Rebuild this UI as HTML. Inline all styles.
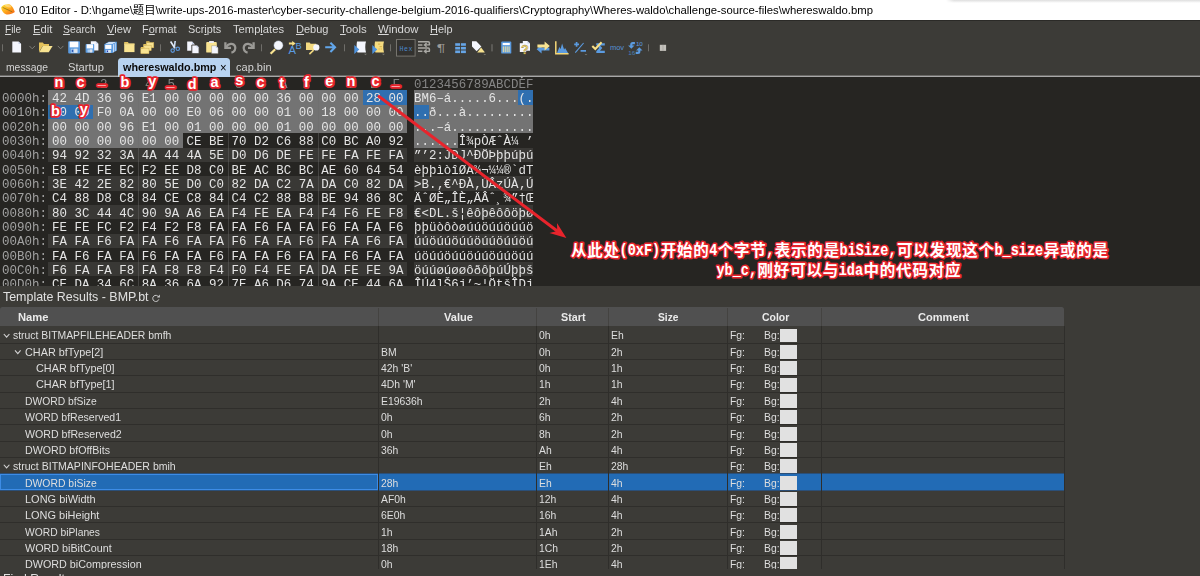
<!DOCTYPE html>
<html lang="en"><head><meta charset="utf-8"><title>010 Editor</title>
<style>
html,body{margin:0;padding:0;background:#3c3b37;overflow:hidden}
#r{position:relative;width:1200px;height:576px;overflow:hidden;background:#3c3b37;font-family:"Liberation Sans","Noto Sans CJK SC",sans-serif}
.b{position:absolute}
.t{position:absolute;white-space:pre;line-height:1;transform-origin:0 0}
.m{font-family:"Liberation Mono","DejaVu Sans Mono",monospace}
svg{position:absolute;left:0;top:0;overflow:visible}
</style></head>
<body><div id="r">
<div class="b" style="left:0px;top:0px;width:1200px;height:20px;background:#ffffff;"></div>
<div class="b" style="left:946px;top:0px;width:254px;height:3px;background:linear-gradient(#dedede,#ffffff);-webkit-mask-image:linear-gradient(90deg,transparent,#000 8px);mask-image:linear-gradient(90deg,transparent,#000 8px)"></div>
<div class="b" style="left:0px;top:20px;width:1200px;height:1px;background:#2b2a27;"></div>
<div class="b" style="left:0px;top:75px;width:1200px;height:1px;background:#6a6966;"></div>
<div class="b" style="left:0px;top:76px;width:1200px;height:1px;background:#a8a8a8;"></div>
<div class="b" style="left:118.2px;top:58px;width:111.8px;height:19px;background:#b8d3f0;border-radius:3.5px 3.5px 0 0"></div>
<div class="b" style="left:0px;top:77px;width:1200px;height:208.89999999999998px;background:#262522;"></div>
<div class="b" style="left:48.0px;top:90.3px;width:359.3px;height:14.32px;background:#393835;"></div>
<div class="b" style="left:413.7px;top:90.3px;width:119.36px;height:14.32px;background:#393835;"></div>
<div class="b" style="left:48.0px;top:118.94px;width:359.3px;height:14.32px;background:#393835;"></div>
<div class="b" style="left:413.7px;top:118.94px;width:119.36px;height:14.32px;background:#393835;"></div>
<div class="b" style="left:48.0px;top:147.58px;width:359.3px;height:14.32px;background:#393835;"></div>
<div class="b" style="left:413.7px;top:147.58px;width:119.36px;height:14.32px;background:#393835;"></div>
<div class="b" style="left:48.0px;top:176.22px;width:359.3px;height:14.32px;background:#393835;"></div>
<div class="b" style="left:413.7px;top:176.22px;width:119.36px;height:14.32px;background:#393835;"></div>
<div class="b" style="left:48.0px;top:204.86px;width:359.3px;height:14.32px;background:#393835;"></div>
<div class="b" style="left:413.7px;top:204.86px;width:119.36px;height:14.32px;background:#393835;"></div>
<div class="b" style="left:48.0px;top:233.5px;width:359.3px;height:14.32px;background:#393835;"></div>
<div class="b" style="left:413.7px;top:233.5px;width:119.36px;height:14.32px;background:#393835;"></div>
<div class="b" style="left:48.0px;top:262.14px;width:359.3px;height:14.32px;background:#393835;"></div>
<div class="b" style="left:413.7px;top:262.14px;width:119.36px;height:14.32px;background:#393835;"></div>
<div class="b" style="left:48.0px;top:90px;width:359.3px;height:43.26px;background:#737373;"></div>
<div class="b" style="left:413.7px;top:90px;width:119.36px;height:43.26px;background:#737373;"></div>
<div class="b" style="left:48.0px;top:133.26px;width:135.0px;height:14.32px;background:#737373;"></div>
<div class="b" style="left:413.7px;top:133.26px;width:44.76px;height:14.32px;background:#737373;"></div>
<div class="b" style="left:363.0px;top:90px;width:44.3px;height:14.62px;background:#2f6fb0;"></div>
<div class="b" style="left:48.0px;top:104.62px;width:45.0px;height:14.32px;background:#2f6fb0;"></div>
<div class="b" style="left:518.14px;top:90px;width:14.92px;height:14.62px;background:#2f6fb0;"></div>
<div class="b" style="left:413.7px;top:104.62px;width:14.92px;height:14.32px;background:#2f6fb0;"></div>
<div class="b" style="left:138.0px;top:90.3px;width:1px;height:195.59999999999997px;background:rgba(110,110,110,0.42);"></div>
<div class="b" style="left:228.0px;top:90.3px;width:1px;height:195.59999999999997px;background:rgba(110,110,110,0.42);"></div>
<div class="b" style="left:318.0px;top:90.3px;width:1px;height:195.59999999999997px;background:rgba(110,110,110,0.42);"></div>
<div class="b" style="left:0px;top:285.9px;width:1200px;height:290.1px;background:#3c3b37;"></div>
<div class="b" style="left:0px;top:307px;width:1064px;height:19px;background:#505050;border-radius:2.5px 2.5px 0 0"></div>
<div class="b" style="left:377.8px;top:308px;width:1px;height:18px;background:#444341;"></div>
<div class="b" style="left:535.5px;top:308px;width:1px;height:18px;background:#444341;"></div>
<div class="b" style="left:607.8px;top:308px;width:1px;height:18px;background:#444341;"></div>
<div class="b" style="left:726.8px;top:308px;width:1px;height:18px;background:#444341;"></div>
<div class="b" style="left:820.8px;top:308px;width:1px;height:18px;background:#444341;"></div>
<div class="b" style="left:0px;top:342.65px;width:1064px;height:1px;background:#2f2e2b;"></div>
<div class="b" style="left:780.2px;top:328.6px;width:17px;height:13.9px;background:#e1e1e1;"></div>
<div class="b" style="left:0px;top:358.99px;width:1064px;height:1px;background:#2f2e2b;"></div>
<div class="b" style="left:780.2px;top:344.95px;width:17px;height:13.9px;background:#e1e1e1;"></div>
<div class="b" style="left:0px;top:375.33px;width:1064px;height:1px;background:#2f2e2b;"></div>
<div class="b" style="left:780.2px;top:361.29px;width:17px;height:13.9px;background:#e1e1e1;"></div>
<div class="b" style="left:0px;top:391.68px;width:1064px;height:1px;background:#2f2e2b;"></div>
<div class="b" style="left:780.2px;top:377.63px;width:17px;height:13.9px;background:#e1e1e1;"></div>
<div class="b" style="left:0px;top:408.03px;width:1064px;height:1px;background:#2f2e2b;"></div>
<div class="b" style="left:780.2px;top:393.98px;width:17px;height:13.9px;background:#e1e1e1;"></div>
<div class="b" style="left:0px;top:424.37px;width:1064px;height:1px;background:#2f2e2b;"></div>
<div class="b" style="left:780.2px;top:410.33px;width:17px;height:13.9px;background:#e1e1e1;"></div>
<div class="b" style="left:0px;top:440.71px;width:1064px;height:1px;background:#2f2e2b;"></div>
<div class="b" style="left:780.2px;top:426.67px;width:17px;height:13.9px;background:#e1e1e1;"></div>
<div class="b" style="left:0px;top:457.06px;width:1064px;height:1px;background:#2f2e2b;"></div>
<div class="b" style="left:780.2px;top:443.01px;width:17px;height:13.9px;background:#e1e1e1;"></div>
<div class="b" style="left:0px;top:473.41px;width:1064px;height:1px;background:#2b4f78;"></div>
<div class="b" style="left:780.2px;top:459.36px;width:17px;height:13.9px;background:#e1e1e1;"></div>
<div class="b" style="left:0px;top:474.11px;width:1064px;height:16.34px;background:#226bb5;"></div>
<div class="b" style="left:0px;top:474.11px;width:377.8px;height:15.64px;background:transparent;box-sizing:border-box;border:1px solid #3d8ce6"></div>
<div class="b" style="left:0px;top:489.75px;width:1064px;height:1px;background:#2b4f78;"></div>
<div class="b" style="left:780.2px;top:475.71px;width:17px;height:13.9px;background:#e1e1e1;"></div>
<div class="b" style="left:0px;top:506.09px;width:1064px;height:1px;background:#2f2e2b;"></div>
<div class="b" style="left:780.2px;top:492.05px;width:17px;height:13.9px;background:#e1e1e1;"></div>
<div class="b" style="left:0px;top:522.44px;width:1064px;height:1px;background:#2f2e2b;"></div>
<div class="b" style="left:780.2px;top:508.39px;width:17px;height:13.9px;background:#e1e1e1;"></div>
<div class="b" style="left:0px;top:538.78px;width:1064px;height:1px;background:#2f2e2b;"></div>
<div class="b" style="left:780.2px;top:524.74px;width:17px;height:13.9px;background:#e1e1e1;"></div>
<div class="b" style="left:0px;top:555.13px;width:1064px;height:1px;background:#2f2e2b;"></div>
<div class="b" style="left:780.2px;top:541.09px;width:17px;height:13.9px;background:#e1e1e1;"></div>
<div class="b" style="left:0px;top:571.47px;width:1064px;height:1px;background:#2f2e2b;"></div>
<div class="b" style="left:780.2px;top:557.43px;width:17px;height:13.9px;background:#e1e1e1;"></div>
<div class="b" style="left:0px;top:568.8px;width:1200px;height:7.2px;background:#3c3b37;z-index:3"></div>
<div class="b" style="left:377.8px;top:326px;width:1px;height:250px;background:#2f2e2b;"></div>
<div class="b" style="left:535.5px;top:326px;width:1px;height:250px;background:#2f2e2b;"></div>
<div class="b" style="left:607.8px;top:326px;width:1px;height:250px;background:#2f2e2b;"></div>
<div class="b" style="left:726.8px;top:326px;width:1px;height:250px;background:#2f2e2b;"></div>
<div class="b" style="left:820.8px;top:326px;width:1px;height:250px;background:#2f2e2b;"></div>
<div class="b" style="left:1064.0px;top:326px;width:1px;height:250px;background:#2f2e2b;"></div>
<span class="t" style="left:18.70px;top:4.97px;font-size:10.9px;color:#000;transform:scale(1.0389,1.0000);">010 Editor - D:\hgame\题目\write-ups-2016-master\cyber-security-challenge-belgium-2016-qualifiers\Cryptography\Wheres-waldo\challenge-source-files\whereswaldo.bmp</span>
<span class="t" style="left:5.40px;top:23.52px;font-size:11.2px;color:#d9d9d9;transform:scale(0.8977,1.0000);"><u>F</u>ile</span>
<span class="t" style="left:33.00px;top:23.52px;font-size:11.2px;color:#d9d9d9;transform:scale(1.0053,1.0000);"><u>E</u>dit</span>
<span class="t" style="left:63.20px;top:23.52px;font-size:11.2px;color:#d9d9d9;transform:scale(0.9248,1.0000);"><u>S</u>earch</span>
<span class="t" style="left:107.00px;top:23.52px;font-size:11.2px;color:#d9d9d9;transform:scale(0.9974,1.0000);"><u>V</u>iew</span>
<span class="t" style="left:142.40px;top:23.52px;font-size:11.2px;color:#d9d9d9;transform:scale(0.9759,1.0000);">F<u>o</u>rmat</span>
<span class="t" style="left:188.40px;top:23.52px;font-size:11.2px;color:#d9d9d9;transform:scale(0.9702,1.0000);">Scr<u>i</u>pts</span>
<span class="t" style="left:233.20px;top:23.52px;font-size:11.2px;color:#d9d9d9;transform:scale(0.9997,1.0000);">Temp<u>l</u>ates</span>
<span class="t" style="left:295.50px;top:23.52px;font-size:11.2px;color:#d9d9d9;transform:scale(0.9853,1.0000);"><u>D</u>ebug</span>
<span class="t" style="left:339.50px;top:23.52px;font-size:11.2px;color:#d9d9d9;transform:scale(1.0220,1.0000);"><u>T</u>ools</span>
<span class="t" style="left:377.50px;top:23.52px;font-size:11.2px;color:#d9d9d9;transform:scale(1.0177,1.0000);"><u>W</u>indow</span>
<span class="t" style="left:429.50px;top:23.52px;font-size:11.2px;color:#d9d9d9;transform:scale(0.9769,1.0000);"><u>H</u>elp</span>
<span class="t" style="left:6.00px;top:61.72px;font-size:11.2px;color:#d4d4d4;transform:scale(0.9250,1.0000);">message</span>
<span class="t" style="left:68.00px;top:61.72px;font-size:11.2px;color:#d4d4d4;transform:scale(0.9978,1.0000);">Startup</span>
<span class="t" style="left:123.00px;top:61.38px;font-size:11.6px;color:#0a0a0a;font-weight:bold;transform:scale(0.9294,1.0000);">whereswaldo.bmp</span>
<span class="t" style="left:219.70px;top:61.30px;font-size:13px;color:#000;transform:scale(0.8691,1.0000);">×</span>
<span class="t" style="left:235.80px;top:61.72px;font-size:11.2px;color:#d4d4d4;transform:scale(0.9840,1.0000);">cap.bin</span>
<div class="b" style="left:0px;top:0px;width:1200px;height:285.9px;overflow:hidden">
<span class="t m" style="left:55.00px;top:78.24px;font-size:12.5px;color:#858585;transform:scale(1.0000,1.0600);">0</span>
<span class="t m" style="left:77.50px;top:78.24px;font-size:12.5px;color:#858585;transform:scale(1.0000,1.0600);">1</span>
<span class="t m" style="left:100.00px;top:78.24px;font-size:12.5px;color:#858585;transform:scale(1.0000,1.0600);">2</span>
<span class="t m" style="left:122.50px;top:78.24px;font-size:12.5px;color:#858585;transform:scale(1.0000,1.0600);">3</span>
<span class="t m" style="left:145.00px;top:78.24px;font-size:12.5px;color:#858585;transform:scale(1.0000,1.0600);">4</span>
<span class="t m" style="left:167.50px;top:78.24px;font-size:12.5px;color:#858585;transform:scale(1.0000,1.0600);">5</span>
<span class="t m" style="left:190.00px;top:78.24px;font-size:12.5px;color:#858585;transform:scale(1.0000,1.0600);">6</span>
<span class="t m" style="left:212.50px;top:78.24px;font-size:12.5px;color:#858585;transform:scale(1.0000,1.0600);">7</span>
<span class="t m" style="left:235.00px;top:78.24px;font-size:12.5px;color:#858585;transform:scale(1.0000,1.0600);">8</span>
<span class="t m" style="left:257.50px;top:78.24px;font-size:12.5px;color:#858585;transform:scale(1.0000,1.0600);">9</span>
<span class="t m" style="left:280.00px;top:78.24px;font-size:12.5px;color:#858585;transform:scale(1.0000,1.0600);">A</span>
<span class="t m" style="left:302.50px;top:78.24px;font-size:12.5px;color:#858585;transform:scale(1.0000,1.0600);">B</span>
<span class="t m" style="left:325.00px;top:78.24px;font-size:12.5px;color:#858585;transform:scale(1.0000,1.0600);">C</span>
<span class="t m" style="left:347.50px;top:78.24px;font-size:12.5px;color:#858585;transform:scale(1.0000,1.0600);">D</span>
<span class="t m" style="left:370.00px;top:78.24px;font-size:12.5px;color:#858585;transform:scale(1.0000,1.0600);">E</span>
<span class="t m" style="left:392.50px;top:78.24px;font-size:12.5px;color:#858585;transform:scale(1.0000,1.0600);">F</span>
<span class="t m" style="left:413.90px;top:78.44px;font-size:12.5px;color:#858585;transform:scale(0.9944,1.0600);">0123456789ABCDEF</span>
<span class="t m" style="left:1.90px;top:92.14px;font-size:12.5px;color:#a2a2a2;transform:scale(1.0000,1.0600);">0000h:</span>
<span class="t m" style="left:52.20px;top:92.14px;font-size:12.5px;color:#e4e4e4;transform:scale(0.9970,1.0600);">42 4D 36 96 E1 00 00 00 00 00 36 00 00 00 28 00</span>
<span class="t m" style="left:413.90px;top:92.14px;font-size:12.5px;color:#e4e4e4;transform:scale(0.9944,1.0600);">BM6–á.....6...(.</span>
<span class="t m" style="left:1.90px;top:106.46px;font-size:12.5px;color:#a2a2a2;transform:scale(1.0000,1.0600);">0010h:</span>
<span class="t m" style="left:52.20px;top:106.46px;font-size:12.5px;color:#e4e4e4;transform:scale(0.9970,1.0600);">00 00 F0 0A 00 00 E0 06 00 00 01 00 18 00 00 00</span>
<span class="t m" style="left:413.90px;top:106.46px;font-size:12.5px;color:#e4e4e4;transform:scale(0.9944,1.0600);">..ð...à.........</span>
<span class="t m" style="left:1.90px;top:120.78px;font-size:12.5px;color:#a2a2a2;transform:scale(1.0000,1.0600);">0020h:</span>
<span class="t m" style="left:52.20px;top:120.78px;font-size:12.5px;color:#e4e4e4;transform:scale(0.9970,1.0600);">00 00 00 96 E1 00 01 00 00 00 01 00 00 00 00 00</span>
<span class="t m" style="left:413.90px;top:120.78px;font-size:12.5px;color:#e4e4e4;transform:scale(0.9944,1.0600);">...–á...........</span>
<span class="t m" style="left:1.90px;top:135.10px;font-size:12.5px;color:#a2a2a2;transform:scale(1.0000,1.0600);">0030h:</span>
<span class="t m" style="left:52.20px;top:135.10px;font-size:12.5px;color:#e4e4e4;transform:scale(0.9970,1.0600);">00 00 00 00 00 00 CE BE 70 D2 C6 88 C0 BC A0 92</span>
<span class="t m" style="left:413.90px;top:135.10px;font-size:12.5px;color:#e4e4e4;transform:scale(0.9944,1.0600);">......Î¾pÒÆˆÀ¼ ’</span>
<span class="t m" style="left:1.90px;top:149.42px;font-size:12.5px;color:#a2a2a2;transform:scale(1.0000,1.0600);">0040h:</span>
<span class="t m" style="left:52.20px;top:149.42px;font-size:12.5px;color:#e4e4e4;transform:scale(0.9970,1.0600);">94 92 32 3A 4A 44 4A 5E D0 D6 DE FE FE FA FE FA</span>
<span class="t m" style="left:413.90px;top:149.42px;font-size:12.5px;color:#e4e4e4;transform:scale(0.9944,1.0600);">”’2:JDJ^ÐÖÞþþúþú</span>
<span class="t m" style="left:1.90px;top:163.74px;font-size:12.5px;color:#a2a2a2;transform:scale(1.0000,1.0600);">0050h:</span>
<span class="t m" style="left:52.20px;top:163.74px;font-size:12.5px;color:#e4e4e4;transform:scale(0.9970,1.0600);">E8 FE FE EC F2 EE D8 C0 BE AC BC BC AE 60 64 54</span>
<span class="t m" style="left:413.90px;top:163.74px;font-size:12.5px;color:#e4e4e4;transform:scale(0.9944,1.0600);">èþþìòîØÀ¾¬¼¼®`dT</span>
<span class="t m" style="left:1.90px;top:178.06px;font-size:12.5px;color:#a2a2a2;transform:scale(1.0000,1.0600);">0060h:</span>
<span class="t m" style="left:52.20px;top:178.06px;font-size:12.5px;color:#e4e4e4;transform:scale(0.9970,1.0600);">3E 42 2E 82 80 5E D0 C0 82 DA C2 7A DA C0 82 DA</span>
<span class="t m" style="left:413.90px;top:178.06px;font-size:12.5px;color:#e4e4e4;transform:scale(0.9944,1.0600);">&gt;B.‚€^ÐÀ‚ÚÂzÚÀ‚Ú</span>
<span class="t m" style="left:1.90px;top:192.38px;font-size:12.5px;color:#a2a2a2;transform:scale(1.0000,1.0600);">0070h:</span>
<span class="t m" style="left:52.20px;top:192.38px;font-size:12.5px;color:#e4e4e4;transform:scale(0.9970,1.0600);">C4 88 D8 C8 84 CE C8 84 C4 C2 88 B8 BE 94 86 8C</span>
<span class="t m" style="left:413.90px;top:192.38px;font-size:12.5px;color:#e4e4e4;transform:scale(0.9944,1.0600);">ÄˆØÈ„ÎÈ„ÄÂˆ¸¾”†Œ</span>
<span class="t m" style="left:1.90px;top:206.70px;font-size:12.5px;color:#a2a2a2;transform:scale(1.0000,1.0600);">0080h:</span>
<span class="t m" style="left:52.20px;top:206.70px;font-size:12.5px;color:#e4e4e4;transform:scale(0.9970,1.0600);">80 3C 44 4C 90 9A A6 EA F4 FE EA F4 F4 F6 FE F8</span>
<span class="t m" style="left:413.90px;top:206.70px;font-size:12.5px;color:#e4e4e4;transform:scale(0.9944,1.0600);">€&lt;DL.š¦êôþêôôöþø</span>
<span class="t m" style="left:1.90px;top:221.02px;font-size:12.5px;color:#a2a2a2;transform:scale(1.0000,1.0600);">0090h:</span>
<span class="t m" style="left:52.20px;top:221.02px;font-size:12.5px;color:#e4e4e4;transform:scale(0.9970,1.0600);">FE FE FC F2 F4 F2 F8 FA FA F6 FA FA F6 FA FA F6</span>
<span class="t m" style="left:413.90px;top:221.02px;font-size:12.5px;color:#e4e4e4;transform:scale(0.9944,1.0600);">þþüòôòøúúöúúöúúö</span>
<span class="t m" style="left:1.90px;top:235.34px;font-size:12.5px;color:#a2a2a2;transform:scale(1.0000,1.0600);">00A0h:</span>
<span class="t m" style="left:52.20px;top:235.34px;font-size:12.5px;color:#e4e4e4;transform:scale(0.9970,1.0600);">FA FA F6 FA FA F6 FA FA F6 FA FA F6 FA FA F6 FA</span>
<span class="t m" style="left:413.90px;top:235.34px;font-size:12.5px;color:#e4e4e4;transform:scale(0.9944,1.0600);">úúöúúöúúöúúöúúöú</span>
<span class="t m" style="left:1.90px;top:249.66px;font-size:12.5px;color:#a2a2a2;transform:scale(1.0000,1.0600);">00B0h:</span>
<span class="t m" style="left:52.20px;top:249.66px;font-size:12.5px;color:#e4e4e4;transform:scale(0.9970,1.0600);">FA F6 FA FA F6 FA FA F6 FA FA F6 FA FA F6 FA FA</span>
<span class="t m" style="left:413.90px;top:249.66px;font-size:12.5px;color:#e4e4e4;transform:scale(0.9944,1.0600);">úöúúöúúöúúöúúöúú</span>
<span class="t m" style="left:1.90px;top:263.98px;font-size:12.5px;color:#a2a2a2;transform:scale(1.0000,1.0600);">00C0h:</span>
<span class="t m" style="left:52.20px;top:263.98px;font-size:12.5px;color:#e4e4e4;transform:scale(0.9970,1.0600);">F6 FA FA F8 FA F8 F8 F4 F0 F4 FE FA DA FE FE 9A</span>
<span class="t m" style="left:413.90px;top:263.98px;font-size:12.5px;color:#e4e4e4;transform:scale(0.9944,1.0600);">öúúøúøøôðôþúÚþþš</span>
<span class="t m" style="left:1.90px;top:278.30px;font-size:12.5px;color:#a2a2a2;transform:scale(1.0000,1.0600);">00D0h:</span>
<span class="t m" style="left:52.20px;top:278.30px;font-size:12.5px;color:#e4e4e4;transform:scale(0.9970,1.0600);">CE DA 34 6C 8A 36 6A 92 7E A6 D6 74 9A CE 44 6A</span>
<span class="t m" style="left:413.90px;top:278.30px;font-size:12.5px;color:#e4e4e4;transform:scale(0.9944,1.0600);">ÎÚ4lŠ6j’~¦ÖtšÎDj</span>
</div>
<span class="t" style="left:2.80px;top:290.50px;font-size:12.4px;color:#e0e0e0;transform:scale(1.0029,1.0000);">Template Results - BMP.bt</span>
<span class="t" style="left:17.50px;top:311.83px;font-size:10.6px;color:#eaeaea;font-weight:bold;transform:scale(1.0568,1.0000);">Name</span>
<span class="t" style="left:443.50px;top:311.83px;font-size:10.6px;color:#eaeaea;font-weight:bold;transform:scale(1.0474,1.0000);">Value</span>
<span class="t" style="left:560.60px;top:311.83px;font-size:10.6px;color:#eaeaea;font-weight:bold;transform:scale(1.0149,1.0000);">Start</span>
<span class="t" style="left:658.00px;top:311.83px;font-size:10.6px;color:#eaeaea;font-weight:bold;transform:scale(0.9668,1.0000);">Size</span>
<span class="t" style="left:761.50px;top:311.83px;font-size:10.6px;color:#eaeaea;font-weight:bold;transform:scale(0.9866,1.0000);">Color</span>
<span class="t" style="left:917.50px;top:311.83px;font-size:10.6px;color:#eaeaea;font-weight:bold;transform:scale(1.0438,1.0000);">Comment</span>
<div class="b" style="left:0px;top:0px;width:1200px;height:568.8px;overflow:hidden">
<span class="t" style="left:13.30px;top:330.43px;font-size:10.6px;color:#dedede;transform:scale(0.9820,1.0000);">struct BITMAPFILEHEADER bmfh</span>
<span class="t" style="left:539.00px;top:330.43px;font-size:10.6px;color:#dedede;transform:scale(0.9806,1.0000);">0h</span>
<span class="t" style="left:610.70px;top:330.43px;font-size:10.6px;color:#dedede;transform:scale(0.9806,1.0000);">Eh</span>
<span class="t" style="left:729.80px;top:330.43px;font-size:10.6px;color:#dedede;transform:scale(0.9806,1.0000);">Fg:</span>
<span class="t" style="left:764.40px;top:330.43px;font-size:10.6px;color:#dedede;transform:scale(0.9806,1.0000);">Bg:</span>
<span class="t" style="left:25.00px;top:346.77px;font-size:10.6px;color:#dedede;transform:scale(1.0229,1.0000);">CHAR bfType[2]</span>
<span class="t" style="left:380.70px;top:346.77px;font-size:10.6px;color:#dedede;transform:scale(0.9806,1.0000);">BM</span>
<span class="t" style="left:539.00px;top:346.77px;font-size:10.6px;color:#dedede;transform:scale(0.9806,1.0000);">0h</span>
<span class="t" style="left:610.70px;top:346.77px;font-size:10.6px;color:#dedede;transform:scale(0.9806,1.0000);">2h</span>
<span class="t" style="left:729.80px;top:346.77px;font-size:10.6px;color:#dedede;transform:scale(0.9806,1.0000);">Fg:</span>
<span class="t" style="left:764.40px;top:346.77px;font-size:10.6px;color:#dedede;transform:scale(0.9806,1.0000);">Bg:</span>
<span class="t" style="left:35.70px;top:363.12px;font-size:10.6px;color:#dedede;transform:scale(1.0268,1.0000);">CHAR bfType[0]</span>
<span class="t" style="left:380.70px;top:363.12px;font-size:10.6px;color:#dedede;transform:scale(0.9806,1.0000);">42h &#x27;B&#x27;</span>
<span class="t" style="left:539.00px;top:363.12px;font-size:10.6px;color:#dedede;transform:scale(0.9806,1.0000);">0h</span>
<span class="t" style="left:610.70px;top:363.12px;font-size:10.6px;color:#dedede;transform:scale(0.9806,1.0000);">1h</span>
<span class="t" style="left:729.80px;top:363.12px;font-size:10.6px;color:#dedede;transform:scale(0.9806,1.0000);">Fg:</span>
<span class="t" style="left:764.40px;top:363.12px;font-size:10.6px;color:#dedede;transform:scale(0.9806,1.0000);">Bg:</span>
<span class="t" style="left:35.70px;top:379.46px;font-size:10.6px;color:#dedede;transform:scale(1.0268,1.0000);">CHAR bfType[1]</span>
<span class="t" style="left:380.70px;top:379.46px;font-size:10.6px;color:#dedede;transform:scale(0.9806,1.0000);">4Dh &#x27;M&#x27;</span>
<span class="t" style="left:539.00px;top:379.46px;font-size:10.6px;color:#dedede;transform:scale(0.9806,1.0000);">1h</span>
<span class="t" style="left:610.70px;top:379.46px;font-size:10.6px;color:#dedede;transform:scale(0.9806,1.0000);">1h</span>
<span class="t" style="left:729.80px;top:379.46px;font-size:10.6px;color:#dedede;transform:scale(0.9806,1.0000);">Fg:</span>
<span class="t" style="left:764.40px;top:379.46px;font-size:10.6px;color:#dedede;transform:scale(0.9806,1.0000);">Bg:</span>
<span class="t" style="left:25.00px;top:395.81px;font-size:10.6px;color:#dedede;transform:scale(0.9745,1.0000);">DWORD bfSize</span>
<span class="t" style="left:380.70px;top:395.81px;font-size:10.6px;color:#dedede;transform:scale(0.9806,1.0000);">E19636h</span>
<span class="t" style="left:539.00px;top:395.81px;font-size:10.6px;color:#dedede;transform:scale(0.9806,1.0000);">2h</span>
<span class="t" style="left:610.70px;top:395.81px;font-size:10.6px;color:#dedede;transform:scale(0.9806,1.0000);">4h</span>
<span class="t" style="left:729.80px;top:395.81px;font-size:10.6px;color:#dedede;transform:scale(0.9806,1.0000);">Fg:</span>
<span class="t" style="left:764.40px;top:395.81px;font-size:10.6px;color:#dedede;transform:scale(0.9806,1.0000);">Bg:</span>
<span class="t" style="left:25.00px;top:412.15px;font-size:10.6px;color:#dedede;transform:scale(0.9942,1.0000);">WORD bfReserved1</span>
<span class="t" style="left:380.70px;top:412.15px;font-size:10.6px;color:#dedede;transform:scale(0.9806,1.0000);">0h</span>
<span class="t" style="left:539.00px;top:412.15px;font-size:10.6px;color:#dedede;transform:scale(0.9806,1.0000);">6h</span>
<span class="t" style="left:610.70px;top:412.15px;font-size:10.6px;color:#dedede;transform:scale(0.9806,1.0000);">2h</span>
<span class="t" style="left:729.80px;top:412.15px;font-size:10.6px;color:#dedede;transform:scale(0.9806,1.0000);">Fg:</span>
<span class="t" style="left:764.40px;top:412.15px;font-size:10.6px;color:#dedede;transform:scale(0.9806,1.0000);">Bg:</span>
<span class="t" style="left:25.00px;top:428.50px;font-size:10.6px;color:#dedede;transform:scale(1.0014,1.0000);">WORD bfReserved2</span>
<span class="t" style="left:380.70px;top:428.50px;font-size:10.6px;color:#dedede;transform:scale(0.9806,1.0000);">0h</span>
<span class="t" style="left:539.00px;top:428.50px;font-size:10.6px;color:#dedede;transform:scale(0.9806,1.0000);">8h</span>
<span class="t" style="left:610.70px;top:428.50px;font-size:10.6px;color:#dedede;transform:scale(0.9806,1.0000);">2h</span>
<span class="t" style="left:729.80px;top:428.50px;font-size:10.6px;color:#dedede;transform:scale(0.9806,1.0000);">Fg:</span>
<span class="t" style="left:764.40px;top:428.50px;font-size:10.6px;color:#dedede;transform:scale(0.9806,1.0000);">Bg:</span>
<span class="t" style="left:25.00px;top:444.84px;font-size:10.6px;color:#dedede;transform:scale(1.0050,1.0000);">DWORD bfOffBits</span>
<span class="t" style="left:380.70px;top:444.84px;font-size:10.6px;color:#dedede;transform:scale(0.9806,1.0000);">36h</span>
<span class="t" style="left:539.00px;top:444.84px;font-size:10.6px;color:#dedede;transform:scale(0.9806,1.0000);">Ah</span>
<span class="t" style="left:610.70px;top:444.84px;font-size:10.6px;color:#dedede;transform:scale(0.9806,1.0000);">4h</span>
<span class="t" style="left:729.80px;top:444.84px;font-size:10.6px;color:#dedede;transform:scale(0.9806,1.0000);">Fg:</span>
<span class="t" style="left:764.40px;top:444.84px;font-size:10.6px;color:#dedede;transform:scale(0.9806,1.0000);">Bg:</span>
<span class="t" style="left:13.30px;top:461.19px;font-size:10.6px;color:#dedede;transform:scale(0.9943,1.0000);">struct BITMAPINFOHEADER bmih</span>
<span class="t" style="left:539.00px;top:461.19px;font-size:10.6px;color:#dedede;transform:scale(0.9806,1.0000);">Eh</span>
<span class="t" style="left:610.70px;top:461.19px;font-size:10.6px;color:#dedede;transform:scale(0.9806,1.0000);">28h</span>
<span class="t" style="left:729.80px;top:461.19px;font-size:10.6px;color:#dedede;transform:scale(0.9806,1.0000);">Fg:</span>
<span class="t" style="left:764.40px;top:461.19px;font-size:10.6px;color:#dedede;transform:scale(0.9806,1.0000);">Bg:</span>
<span class="t" style="left:25.00px;top:477.53px;font-size:10.6px;color:#dedede;transform:scale(0.9822,1.0000);">DWORD biSize</span>
<span class="t" style="left:380.70px;top:477.53px;font-size:10.6px;color:#dedede;transform:scale(0.9806,1.0000);">28h</span>
<span class="t" style="left:539.00px;top:477.53px;font-size:10.6px;color:#dedede;transform:scale(0.9806,1.0000);">Eh</span>
<span class="t" style="left:610.70px;top:477.53px;font-size:10.6px;color:#dedede;transform:scale(0.9806,1.0000);">4h</span>
<span class="t" style="left:729.80px;top:477.53px;font-size:10.6px;color:#dedede;transform:scale(0.9806,1.0000);">Fg:</span>
<span class="t" style="left:764.40px;top:477.53px;font-size:10.6px;color:#dedede;transform:scale(0.9806,1.0000);">Bg:</span>
<span class="t" style="left:25.00px;top:493.88px;font-size:10.6px;color:#dedede;transform:scale(1.0352,1.0000);">LONG biWidth</span>
<span class="t" style="left:380.70px;top:493.88px;font-size:10.6px;color:#dedede;transform:scale(0.9806,1.0000);">AF0h</span>
<span class="t" style="left:539.00px;top:493.88px;font-size:10.6px;color:#dedede;transform:scale(0.9806,1.0000);">12h</span>
<span class="t" style="left:610.70px;top:493.88px;font-size:10.6px;color:#dedede;transform:scale(0.9806,1.0000);">4h</span>
<span class="t" style="left:729.80px;top:493.88px;font-size:10.6px;color:#dedede;transform:scale(0.9806,1.0000);">Fg:</span>
<span class="t" style="left:764.40px;top:493.88px;font-size:10.6px;color:#dedede;transform:scale(0.9806,1.0000);">Bg:</span>
<span class="t" style="left:25.00px;top:510.22px;font-size:10.6px;color:#dedede;transform:scale(1.0342,1.0000);">LONG biHeight</span>
<span class="t" style="left:380.70px;top:510.22px;font-size:10.6px;color:#dedede;transform:scale(0.9806,1.0000);">6E0h</span>
<span class="t" style="left:539.00px;top:510.22px;font-size:10.6px;color:#dedede;transform:scale(0.9806,1.0000);">16h</span>
<span class="t" style="left:610.70px;top:510.22px;font-size:10.6px;color:#dedede;transform:scale(0.9806,1.0000);">4h</span>
<span class="t" style="left:729.80px;top:510.22px;font-size:10.6px;color:#dedede;transform:scale(0.9806,1.0000);">Fg:</span>
<span class="t" style="left:764.40px;top:510.22px;font-size:10.6px;color:#dedede;transform:scale(0.9806,1.0000);">Bg:</span>
<span class="t" style="left:25.00px;top:526.57px;font-size:10.6px;color:#dedede;transform:scale(0.9724,1.0000);">WORD biPlanes</span>
<span class="t" style="left:380.70px;top:526.57px;font-size:10.6px;color:#dedede;transform:scale(0.9806,1.0000);">1h</span>
<span class="t" style="left:539.00px;top:526.57px;font-size:10.6px;color:#dedede;transform:scale(0.9806,1.0000);">1Ah</span>
<span class="t" style="left:610.70px;top:526.57px;font-size:10.6px;color:#dedede;transform:scale(0.9806,1.0000);">2h</span>
<span class="t" style="left:729.80px;top:526.57px;font-size:10.6px;color:#dedede;transform:scale(0.9806,1.0000);">Fg:</span>
<span class="t" style="left:764.40px;top:526.57px;font-size:10.6px;color:#dedede;transform:scale(0.9806,1.0000);">Bg:</span>
<span class="t" style="left:25.00px;top:542.91px;font-size:10.6px;color:#dedede;transform:scale(1.0155,1.0000);">WORD biBitCount</span>
<span class="t" style="left:380.70px;top:542.91px;font-size:10.6px;color:#dedede;transform:scale(0.9806,1.0000);">18h</span>
<span class="t" style="left:539.00px;top:542.91px;font-size:10.6px;color:#dedede;transform:scale(0.9806,1.0000);">1Ch</span>
<span class="t" style="left:610.70px;top:542.91px;font-size:10.6px;color:#dedede;transform:scale(0.9806,1.0000);">2h</span>
<span class="t" style="left:729.80px;top:542.91px;font-size:10.6px;color:#dedede;transform:scale(0.9806,1.0000);">Fg:</span>
<span class="t" style="left:764.40px;top:542.91px;font-size:10.6px;color:#dedede;transform:scale(0.9806,1.0000);">Bg:</span>
<span class="t" style="left:25.00px;top:559.26px;font-size:10.6px;color:#dedede;transform:scale(1.0166,1.0000);">DWORD biCompression</span>
<span class="t" style="left:380.70px;top:559.26px;font-size:10.6px;color:#dedede;transform:scale(0.9806,1.0000);">0h</span>
<span class="t" style="left:539.00px;top:559.26px;font-size:10.6px;color:#dedede;transform:scale(0.9806,1.0000);">1Eh</span>
<span class="t" style="left:610.70px;top:559.26px;font-size:10.6px;color:#dedede;transform:scale(0.9806,1.0000);">4h</span>
<span class="t" style="left:729.80px;top:559.26px;font-size:10.6px;color:#dedede;transform:scale(0.9806,1.0000);">Fg:</span>
<span class="t" style="left:764.40px;top:559.26px;font-size:10.6px;color:#dedede;transform:scale(0.9806,1.0000);">Bg:</span>
</div>
<span class="t" style="left:2.80px;top:573.10px;font-size:12.4px;color:#e0e0e0;transform:scale(0.9873,1.0000);z-index:4;">Find Results</span>
<svg width="1200" height="576" viewBox="0 0 1200 576" font-family="'Liberation Sans',sans-serif"><rect x="2.0" y="44.3" width="1" height="7" fill="#6f6e6a"/>
<rect x="160.0" y="44.3" width="1" height="7" fill="#6f6e6a"/>
<rect x="261.0" y="44.3" width="1" height="7" fill="#6f6e6a"/>
<rect x="344.0" y="44.3" width="1" height="7" fill="#6f6e6a"/>
<rect x="390.0" y="44.3" width="1" height="7" fill="#6f6e6a"/>
<rect x="648.0" y="44.3" width="1" height="7" fill="#6f6e6a"/>
<rect x="491" y="44.2" width="2" height="7.2" fill="#5b5a56"/>
<path d="M12.3 41.5h6.200000000000001l2.6 2.6v8.4h-8.8z" fill="#f4f6fd" /><path d="M18.5 41.5v2.6h2.6z" fill="#c5cfe6"/>
<polyline points="29.4,45.9 32.199999999999996,48.8 35.0,45.9" fill="none" stroke="#7d7c77" stroke-width="1"/>
<polyline points="57.8,45.9 60.599999999999994,48.8 63.4,45.9" fill="none" stroke="#7d7c77" stroke-width="1"/>
<path d="M39 52V42.6h3.8l1.2 1.3h5v2.3H42.5z" fill="#e3c25c"/><path d="M39.2 52.2l3.6-6.2h9.8l-3.9 6.2z" fill="#f8e391"/>
<rect x="68.2" y="41.2" width="11.8" height="12.2" rx="0.9" fill="#5b9be0"/><rect x="69.73" y="41.63" width="8.61" height="5.73" fill="#fdfdff"/><rect x="70.80" y="48.76" width="6.61" height="4.03" fill="#a9cbf0"/><rect x="74.10" y="48.76" width="3.30" height="4.03" fill="#dde4ee"/><rect x="71.74" y="49.74" width="1.53" height="2.20" fill="#2b55b0"/>
<path d="M90.8 41.2h5.0l2.6 2.6v6.700000000000001h-7.6z" fill="#f4f6fd" /><path d="M95.8 41.2v2.6h2.6z" fill="#c5cfe6"/>
<rect x="85.6" y="44" width="8.6" height="8.8" rx="0.9" fill="#5b9be0"/><rect x="86.72" y="44.31" width="6.28" height="4.14" fill="#fdfdff"/><rect x="87.49" y="49.46" width="4.82" height="2.90" fill="#a9cbf0"/><rect x="89.90" y="49.46" width="2.41" height="2.90" fill="#dde4ee"/>
<path d="M104.3 44.2L108.6 41.7H116.9V50.4L112.3 53.1H104.3z" fill="#5b9be0"/>
<path d="M108.9 42h6.9l-1.3.8h-6.9z M106.9 43.2h6.9l-1.3.8h-6.9z" fill="#f4f7fd"/>
<path d="M113 44.6l.9-.55v7.9l-.9.55z M114.8 43.5l.9-.55v7.9l-.9.55z" fill="#d4e3f7"/>
<rect x="105.2" y="44.8" width="6.2" height="4.1" fill="#fdfdff"/><rect x="105.9" y="50" width="4.9" height="2.6" fill="#a9cbf0"/><rect x="108.4" y="50" width="2.4" height="2.6" fill="#dde4ee"/><rect x="106.9" y="50.6" width="1.1" height="1.4" fill="#2b2fa8"/>
<path d="M124.2 43.7v-1.6h3.708l1 1.6z" fill="#e3c25c"/><rect x="124.2" y="43.6" width="10.3" height="8.5" fill="#f8e391"/><rect x="124.2" y="43.6" width="10.3" height="1" fill="#f0d880"/>
<path d="M146.2 42.6v-1.4h3.04l.9 1.4z" fill="#e3c25c"/><rect x="146.2" y="42.5" width="7.6" height="5.3" fill="#f8e391" stroke="#cfae52" stroke-width="0.5"/>
<path d="M143.4 45.3v-1.4h3.12l.9 1.4z" fill="#e3c25c"/><rect x="143.4" y="45.199999999999996" width="7.8" height="5.5" fill="#f8e391" stroke="#cfae52" stroke-width="0.5"/>
<path d="M140.8 48.3v-1.4h3.28l.9 1.4z" fill="#e3c25c"/><rect x="140.8" y="48.199999999999996" width="8.2" height="5.5" fill="#f8e391" stroke="#cfae52" stroke-width="0.5"/>
<path d="M169.9 41.9l1.4-.8 4.4 6.9-1.4.8z" fill="#e4eefb"/><path d="M174.4 40.9h1.6l-1 7.1-1.5-.4z" fill="#cfe0f6"/>
<circle cx="172.7" cy="50.6" r="1.7" fill="none" stroke="#5b95d8" stroke-width="1.2"/><circle cx="177.8" cy="48.8" r="1.7" fill="none" stroke="#5b95d8" stroke-width="1.2"/>
<path d="M187.2 41.6h4.800000000000001l2.6 2.6v6.6h-7.4z" fill="#f4f6fd" /><path d="M192.0 41.6v2.6h2.6z" fill="#c5cfe6"/>
<path d="M191.8 45h4.699999999999999l2.6 2.6v6.1h-7.3z" fill="#f4f6fd" stroke="#3c3b37" stroke-width="0.9"/><path d="M196.50000000000003 45v2.6h2.6z" fill="#c5cfe6"/>
<rect x="206.2" y="42" width="10.6" height="10.6" rx="0.9" fill="#f8e391"/><rect x="209" y="40.9" width="5" height="2.2" rx="0.6" fill="#e9e9ee"/>
<path d="M211.6 45.7h4.3l2.2 2.2v5.7h-6.5z" fill="#f4f6fd" stroke="#8d8770" stroke-width="0.4"/><path d="M215.9 45.7v2.2h2.2z" fill="#c5cfe6"/>
<path d="M225.4 42.2V47.8H231" fill="none" stroke="#9b9a96" stroke-width="2.3"/><path d="M226.2 47C228.3 43.4 233.4 42.6 235 46.2C236.2 49.2 234.2 52 231.4 52.6" fill="none" stroke="#9b9a96" stroke-width="2.3"/>
<path d="M253.6 42.2V47.8H248" fill="none" stroke="#9b9a96" stroke-width="2.3"/><path d="M252.8 47C250.7 43.4 245.6 42.6 244 46.2C242.8 49.2 244.8 52 247.6 52.6" fill="none" stroke="#9b9a96" stroke-width="2.3"/>
<path d="M275.2 49.2L270.6 53.8" stroke="#f8e391" stroke-width="2.2"/><circle cx="278.4" cy="45.3" r="4.4" fill="#f4f6fd" stroke="#dbe6f8" stroke-width="0.5"/>
<path d="M288.9 42.5h3.3v-1.5l3.5 2.5-3.5 2.5v-1.5h-3.3z" fill="#f7df85"/>
<text x="288.4" y="53.5" font-size="11.2" fill="#5b9be0">A</text><text x="295.6" y="48.9" font-size="9.2" fill="#5b9be0">B</text>
<path d="M306 42.4h3.6l1 1.3h5.6v6.3H306z" fill="#f3da80"/><path d="M313.6 50.2L309.4 54.2" stroke="#f3da80" stroke-width="1.6"/><circle cx="316.3" cy="47.4" r="3.1" fill="#f4f6fd"/>
<path d="M325.2 47.3H334.4M330.4 42.8L335 47.3L330.4 51.9" fill="none" stroke="#62a6ea" stroke-width="2.1"/>
<path d="M357 41.4H366C365 44.5 365 49 366 52.6H357.4C356.4 49 356.4 45 357 41.4z" fill="#f4f6fd"/><path d="M354.3 45L359.3 49.5L354.3 54z" fill="#4e93de"/><path d="M364 53.8h3l-1.5 1.4z" fill="#77766f"/>
<path d="M375 41.4H384C383 44.5 383 49 384 52.6H375.4C374.4 49 374.4 45 375 41.4z" fill="#f6dc80"/><path d="M378 44.2h2.2M379.5 46.6h2.4M378.4 49h1.6M380.6 49h1.4" stroke="#dcb850" stroke-width="1.2"/><path d="M372.3 45L377.3 49.5L372.3 54z" fill="#4e93de"/><path d="M382 53.8h3l-1.5 1.4z" fill="#77766f"/>
<rect x="396.5" y="39.5" width="18.6" height="16.6" fill="#32312e" stroke="#76746e" stroke-width="1"/>
<text x="399.5" y="50.6" font-size="6.6" letter-spacing="0.55" font-family="'Liberation Mono',monospace" fill="#4b86cb">Hex</text>
<path d="M418 41.8h10.2q1.2 0 1.2 1.2v1.9M418 44.9h4.4M418 48.1h10.2q1.2 0 1.2 1.2v2M418 51.3h4.4" fill="none" stroke="#a9a8a3" stroke-width="1.5"/>
<path d="M429.9 44.9h-4.6M426.6 43l-2.2 1.9 2.2 1.9M429.9 51.3h-4.6M426.6 49.4l-2.2 1.9 2.2 1.9" fill="none" stroke="#a9a8a3" stroke-width="1.3"/>
<text x="436.8" y="51.5" font-size="10.6" textLength="8.6" lengthAdjust="spacingAndGlyphs" fill="#9b9a96">¶</text>
<rect x="455.2" y="43.2" width="4.9" height="2.6" fill="#66a5e6"/>
<rect x="455.2" y="46.9" width="4.9" height="2.6" fill="#66a5e6"/>
<rect x="455.2" y="50.5" width="4.9" height="2.6" fill="#66a5e6"/>
<rect x="461" y="43.2" width="4.9" height="2.6" fill="#66a5e6"/>
<rect x="461" y="46.9" width="4.9" height="2.6" fill="#66a5e6"/>
<rect x="461" y="50.5" width="4.9" height="2.6" fill="#66a5e6"/>
<path d="M472 41.3h4.3l5.1 5.3-4.8 4.7-4.6-4.9z" fill="#f4f6fd"/><path d="M477.2 52.6l3.9-5 3.5 4.3v.7z" fill="#f6e28f"/><path d="M483.4 53.9h2.8l-1.4 1.3z" fill="#77766f"/>
<rect x="501.2" y="41.5" width="10.1" height="12.1" rx="0.9" fill="#5b9be0"/><rect x="502.7" y="43" width="7.1" height="2.1" fill="#fdfdff"/>
<rect x="502.8" y="46.4" width="1.1" height="5.8" fill="#e6dba4"/>
<rect x="504.7" y="46.4" width="1.1" height="5.8" fill="#e6dba4"/>
<rect x="506.6" y="46.4" width="1.1" height="5.8" fill="#e6dba4"/>
<rect x="508.5" y="46.4" width="1.1" height="5.8" fill="#e6dba4"/>
<rect x="519.8" y="43.2" width="6.4" height="8.8" fill="#f4f6fd"/>
<path d="M522.8 41h4.6l2.6 2.6v7.200000000000001h-7.2z" fill="#f4f6fd" /><path d="M527.4 41v2.6h2.6z" fill="#c5cfe6"/>
<text x="521.1" y="54.3" font-size="12.6" font-weight="bold" fill="#f7dc75" stroke="#8a7430" stroke-width="0.35">?</text>
<path d="M536.7 49.2l4.9-4.6v3.2h7.8v2.8h-7.8v3z" fill="#5b9be0"/><path d="M549.8 46l-5.2-4.5v2.9h-7.2v3h7.2v3.1z" fill="#f8e391"/>
<path d="M557 53l2.4-6 1.2 2 1.5-5.6 2 6 1-1.4 3 5z" fill="#5b9be0"/><path d="M555.8 41.2V53.7H568.6" fill="none" stroke="#f5d878" stroke-width="1.5"/>
<path d="M574.2 44.3h4.8M576.6 41.9v4.8M580.6 50.9h5.4" stroke="#5b9be0" stroke-width="1.7"/><path d="M575.3 52.6L583.6 43" stroke="#5b9be0" stroke-width="1.1"/><path d="M584.6 53.9h2.8l-1.4 1.3z" fill="#77766f"/>
<path d="M596.3 43.3h8.5v2.1h-4.8l2.3 2.7-2.3 2.7h4.8v2.1h-8.5v-1.6l2.9-3.2-2.9-3.2z" fill="#5b9be0"/><path d="M592.3 46l3 3 6.3-6.8" fill="none" stroke="#f7de85" stroke-width="2.1"/>
<text x="609.9" y="49.9" font-size="7.5" fill="#5b9be0" fill-opacity="0.92">mov</text>
<path d="M634.9 43.2H632.7Q631.3 43.2 631.3 44.6V46" fill="none" stroke="#5b9be0" stroke-width="2.2"/><path d="M628.1 45.5h6.4l-3.2 3.2z" fill="#5b9be0"/>
<path d="M635.7 52.8H637.9Q639.3 52.8 639.3 51.4V50" fill="none" stroke="#5b9be0" stroke-width="2.2"/><path d="M636.1 50.5h6.4l-3.2-3.2z" fill="#5b9be0"/>
<text x="635.9" y="45.7" font-size="6.2" fill="#5b9be0">10</text><text x="628.2" y="54.6" font-size="6.2" fill="#4a80ba">16</text>
<rect x="659.8" y="44.8" width="6.3" height="6.1" fill="#c3c1bb"/><rect x="662.7" y="44.8" width="0.6" height="6.1" fill="#9d9b96"/>
<defs><linearGradient id="lg" x1="0" y1="0" x2="1" y2="1"><stop offset="0" stop-color="#ffe43c"/><stop offset="0.45" stop-color="#ffb21e"/><stop offset="1" stop-color="#f45c14"/></linearGradient></defs>
<path d="M1.2 7.2C3 4.6 7 3.6 10 4.6C12.4 6 14 9.5 14.8 12C12.5 13.6 9.5 14.8 6.5 14.4C3.5 13.6 1.4 10.5 1.2 7.2z" fill="url(#lg)"/><ellipse cx="8" cy="6" rx="3.2" ry="1.3" fill="#fff" opacity="0.35" transform="rotate(12 8 6)"/><path d="M2.6 7.4L12.2 11.8" stroke="#7a6a18" stroke-width="0.9" opacity="0.75"/>
<path d="M158.6 297a3.1 3.1 0 1 0 .2 2.4" fill="none" stroke="#c9c9c9" stroke-width="1"/><path d="M159.9 294.6v2.9h-2.9z" fill="#c9c9c9"/>
<path d="M520.2 76.6h3.2l-1.6 1.9z" fill="#b4b4b4"/>
<polyline points="3.8,334.0 6.6,337.2 9.399999999999999,334.0" fill="none" stroke="#d2d2d2" stroke-width="1.1"/>
<polyline points="15.0,350.35 17.8,353.55 20.6,350.35" fill="none" stroke="#d2d2d2" stroke-width="1.1"/>
<polyline points="3.8,464.76 6.6,467.96 9.399999999999999,464.76" fill="none" stroke="#d2d2d2" stroke-width="1.1"/></svg>
<svg width="1200" height="576" viewBox="0 0 1200 576"><line x1="379.0" y1="96.5" x2="557.22" y2="230.97" stroke="#e8242c" stroke-width="3" stroke-linecap="round"/>
<polygon points="566.40,237.90 549.49,232.91 557.22,230.97 556.96,223.01" fill="#e8242c"/>
<g font-family="'Liberation Sans',sans-serif" font-weight="bold" font-size="14.5" text-anchor="middle" fill="#fff" stroke="#e8242c" stroke-width="3.7" stroke-linejoin="round" paint-order="stroke"><text x="59" y="86.9">n</text><text x="80.6" y="86.9">c</text><text x="101.7" y="84.2">_</text><text x="125" y="86.9">b</text><text x="152.3" y="85.7">y</text><text x="170.5" y="86.3">_</text><text x="192.3" y="88.7">d</text><text x="214.6" y="86.5">a</text><text x="239.2" y="85.2">s</text><text x="260.6" y="86.9">c</text><text x="281.7" y="88.1">t</text><text x="306.3" y="87.3">f</text><text x="329.4" y="86.45">e</text><text x="351" y="86.45">n</text><text x="375.6" y="86.45">c</text><text x="395.8" y="85.1">_</text><text x="55.4" y="115.7">b</text><text x="83.8" y="113.5">y</text></g>
<g font-weight="bold" fill="#fff" stroke="#e8242c" stroke-width="3" stroke-linejoin="round" paint-order="stroke"><text x="571.00" y="256.4" font-family="'Noto Sans CJK SC',sans-serif" font-size="15.5" letter-spacing="0.80">从此处</text><text transform="translate(619.50,255.10) scale(0.8707,1)" font-family="'Liberation Mono',monospace" font-size="15.6">(0xF)</text><text x="660.65" y="256.4" font-family="'Noto Sans CJK SC',sans-serif" font-size="15.5" letter-spacing="0.80">开始的</text><text transform="translate(709.15,255.10) scale(0.8707,1)" font-family="'Liberation Mono',monospace" font-size="15.6">4</text><text x="717.70" y="256.4" font-family="'Noto Sans CJK SC',sans-serif" font-size="15.5" letter-spacing="0.80">个字节</text><text transform="translate(766.20,255.10) scale(0.8707,1)" font-family="'Liberation Mono',monospace" font-size="15.6">,</text><text x="774.75" y="256.4" font-family="'Noto Sans CJK SC',sans-serif" font-size="15.5" letter-spacing="0.80">表示的是</text><text transform="translate(839.55,255.10) scale(0.8707,1)" font-family="'Liberation Mono',monospace" font-size="15.6">biSize,</text><text x="897.00" y="256.4" font-family="'Noto Sans CJK SC',sans-serif" font-size="15.5" letter-spacing="0.80">可以发现这个</text><text transform="translate(994.40,255.10) scale(0.8707,1)" font-family="'Liberation Mono',monospace" font-size="15.6">b_size</text><text x="1043.70" y="256.4" font-family="'Noto Sans CJK SC',sans-serif" font-size="15.5" letter-spacing="0.80">异或的是</text><text transform="translate(716.40,274.70) scale(0.8707,1)" font-family="'Liberation Mono',monospace" font-size="15.6">yb_c,</text><text x="757.55" y="276.0" font-family="'Noto Sans CJK SC',sans-serif" font-size="15.5" letter-spacing="0.80">刚好可以与</text><text transform="translate(838.65,274.70) scale(0.8707,1)" font-family="'Liberation Mono',monospace" font-size="15.6">ida</text><text x="863.50" y="276.0" font-family="'Noto Sans CJK SC',sans-serif" font-size="15.5" letter-spacing="0.80">中的代码对应</text></g></svg>
</div></body></html>
